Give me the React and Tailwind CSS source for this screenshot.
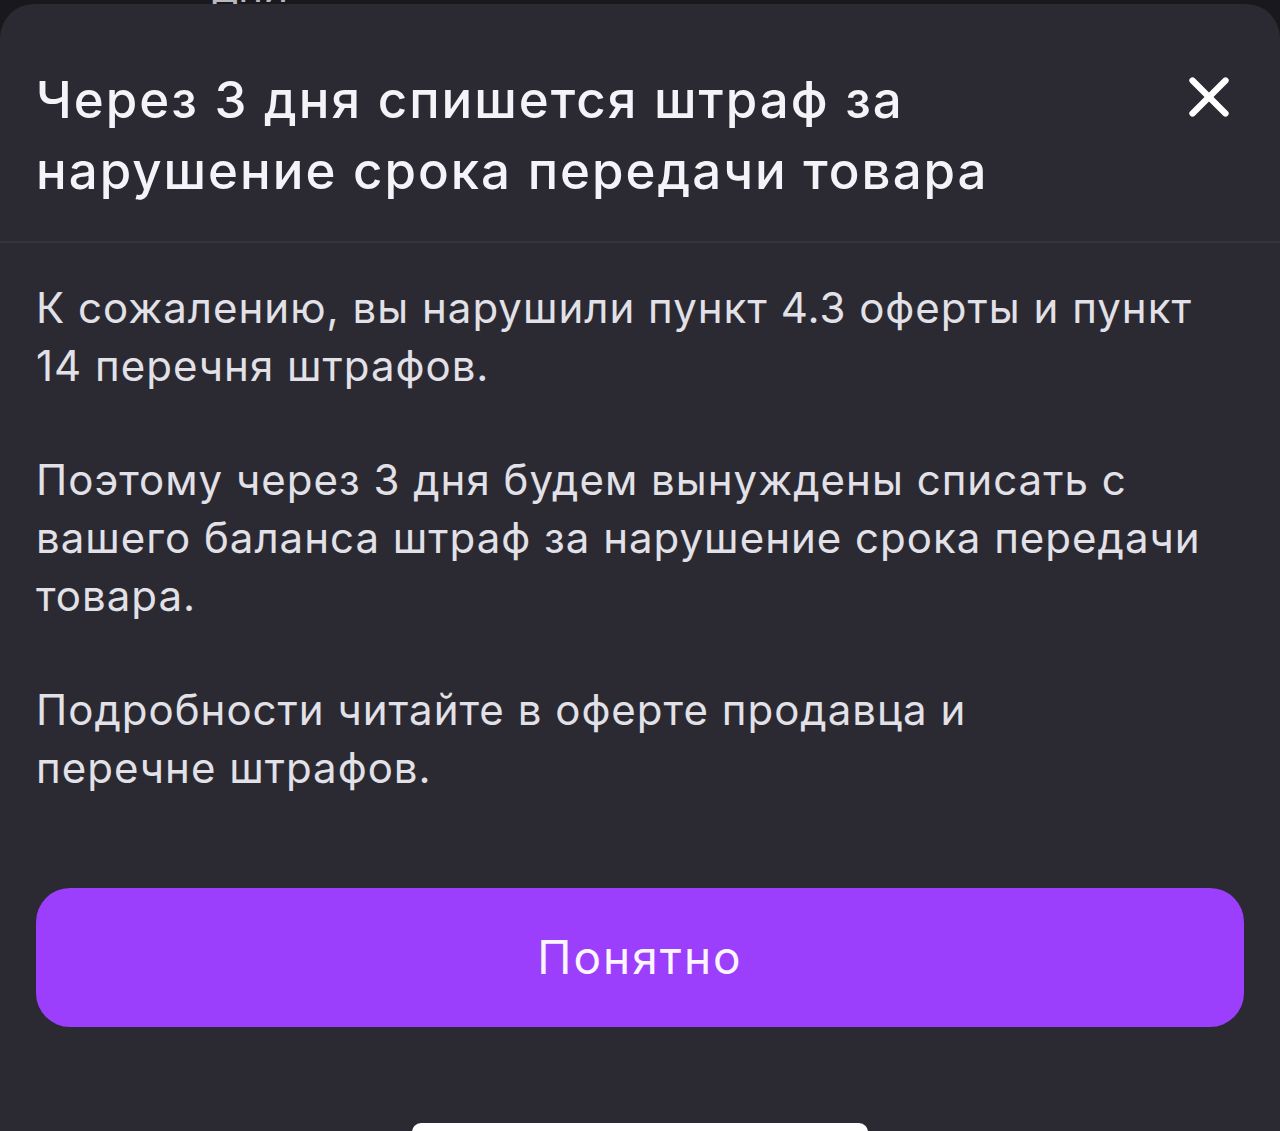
import { X } from 'lucide-react';

const font = { fontFamily: 'Inter, "Noto Sans", sans-serif' };

export default function App() {
  return (
    <div className="min-h-screen bg-[#19181d] pt-[4px] overflow-hidden" style={font}>
      {/* peek of the screen behind the sheet */}
      <div className="relative h-0">
        <span className="absolute left-[212px] top-[-38px] text-[42px] leading-none text-[#b9b8bf]">дни</span>
      </div>

      <div className="relative h-[1127px] rounded-t-[34px] bg-[#2b2a33] flex flex-col">
        <div className="flex items-start justify-between pl-9 pr-[38px] pt-[60px] pb-[35px]">
          <h2 className="text-[51px] leading-[71px] font-medium text-[#f4f3f7] tracking-[2px]">
            Через 3 дня спишется штраф за<br />нарушение срока передачи товара
          </h2>
          <button className="text-white">
            <X size={66} strokeWidth={2.3} />
          </button>
        </div>

        <div className="h-[2px] bg-[#35343c]" />

        <div className="pl-9 pr-[30px] pt-[36px] flex flex-col gap-[56px] text-[42px] leading-[58px] text-[#e2e1e7] tracking-[1px]">
          <p>К сожалению, вы нарушили пункт 4.3 оферты и пункт<br />14 перечня штрафов.</p>
          <p>Поэтому через 3 дня будем вынуждены списать с<br />вашего баланса штраф за нарушение срока передачи<br />товара.</p>
          <p>Подробности читайте в оферте продавца и<br />перечне штрафов.</p>
        </div>

        <div className="px-9 mt-auto mb-[104px]">
          <button className="w-full h-[139px] rounded-[34px] bg-[#9b3ffc] text-[46px] text-[#fbf5ff] font-normal tracking-[2px]">
            Понятно
          </button>
        </div>

        <div className="absolute left-[412px] bottom-[-10px] w-[456px] h-[18px] rounded-full bg-white" />
      </div>
    </div>
  );
}
